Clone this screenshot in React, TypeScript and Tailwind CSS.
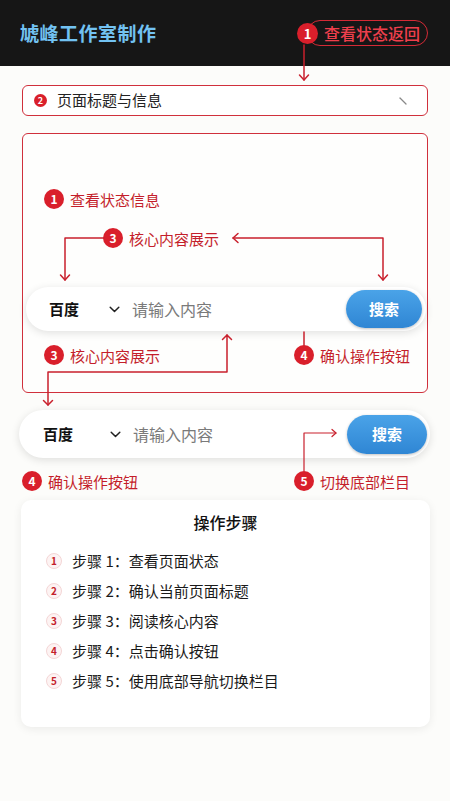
import React from "react";

const RED = "#c9202d";

function Badge({ n, size = 20, text = 12 }: { n: number; size?: number; text?: number }) {
  return (
    <span
      className="flex shrink-0 items-center justify-center rounded-full bg-[#d91f2b] font-bold text-white"
      style={{ width: size, height: size, fontSize: text, lineHeight: 1 }}
    >
      {n}
    </span>
  );
}

function Label({ n, label }: { n: number; label: string }) {
  return (
    <div className="flex items-center gap-[6px]">
      <Badge n={n} />
      <span className="text-[15px] leading-none text-[#c41e2b]">{label}</span>
    </div>
  );
}

function SearchBar({ h, btnW, btnH, pl, pr, leftW }: { h: number; btnW: number; btnH: number; pl: number; pr: number; leftW: number }) {
  return (
    <div
      className="flex items-center rounded-full bg-white shadow-[0_2px_8px_rgba(0,0,0,0.12)]"
      style={{ height: h, paddingLeft: pl, paddingRight: pr }}
    >
      <div className="flex shrink-0 items-center justify-between" style={{ width: leftW }}>
        <span className="text-[15px] font-bold text-[#111]">百度</span>
        <svg width="11" height="7" viewBox="0 0 11 7">
          <path d="M1.2 1.2 L5.5 5.5 L9.8 1.2" fill="none" stroke="#222" strokeWidth="1.5" strokeLinecap="round" strokeLinejoin="round" />
        </svg>
      </div>
      <span className="ml-[12px] text-[16px] text-[#7a7a7a]">请输入内容</span>
      <div className="flex-1" />
      <div
        className="flex items-center justify-center rounded-full bg-gradient-to-b from-[#4aa3e8] to-[#2f86d4] text-[15px] font-bold text-white shadow-[0_1px_3px_rgba(0,0,0,0.25)]"
        style={{ width: btnW, height: btnH }}
      >
        搜索
      </div>
    </div>
  );
}

function Arrows() {
  const s = { stroke: RED, strokeWidth: 1.5, fill: "none", strokeLinecap: "round" as const, strokeLinejoin: "round" as const };
  return (
    <svg className="pointer-events-none absolute left-0 top-0" width="450" height="801" viewBox="0 0 450 801">
      <path d="M304 45 V80" {...s} />
      <path d="M299.5 75 L304 80 L308.5 75" {...s} />
      <path d="M104 238 H65 V280" {...s} />
      <path d="M60.5 275 L65 280 L69.5 275" {...s} />
      <path d="M233 238 H383 V280" {...s} />
      <path d="M238 233.5 L233 238 L238 242.5" {...s} />
      <path d="M378.5 275 L383 280 L387.5 275" {...s} />
      <path d="M304 332 V345" {...s} />
      <path d="M227 335 V372 H48 V405" {...s} />
      <path d="M222.5 339.5 L227 335 L231.5 339.5" {...s} />
      <path d="M43.5 400.5 L48 405 L52.5 400.5" {...s} />
      <path d="M304 471 V433 H336" {...s} strokeWidth={1.2} />
      <path d="M332 429.5 L336 433 L332 436.5" {...s} strokeWidth={1.2} />
    </svg>
  );
}

export default function App() {
  const steps = ["查看页面状态", "确认当前页面标题", "阅读核心内容", "点击确认按钮", "使用底部导航切换栏目"];
  return (
    <div
      className="relative h-[801px] w-[450px] overflow-hidden bg-[#fcfcfa]"
      style={{ fontFamily: '"Noto Sans CJK SC", "Noto Sans", sans-serif' }}
    >
      {/* header */}
      <div className="flex h-[66px] items-center justify-between bg-[#161616] pl-[20px] pr-[22px]">
        <span className="text-[19px] font-bold tracking-[0.5px] text-[#72c2f2]">虓峰工作室制作</span>
        <div className="relative flex h-[26px] items-center">
          <div className="absolute left-[-10px] z-10">
            <Badge n={1} size={21} text={13} />
          </div>
          <div className="flex h-[26px] items-center rounded-full border-[1.5px] border-[#d42a36] pl-[16px] pr-[7px]">
            <span className="text-[16px] font-medium leading-none text-[#ee3f4c]">查看状态返回</span>
          </div>
        </div>
      </div>

      {/* box 2 */}
      <div className="mx-[22px] mt-[19px] flex h-[31px] items-center rounded-[6px] border-[1.5px] border-[#d0303c] bg-white pl-[11px] pr-[20px]">
        <Badge n={2} size={13} text={9} />
        <span className="ml-[10px] text-[15px] text-[#222]">页面标题与信息</span>
        <div className="flex-1" />
        <svg width="8" height="8" viewBox="0 0 8 8">
          <path d="M1 1 L7 7" stroke="#888" strokeWidth="1.3" strokeLinecap="round" />
        </svg>
      </div>

      {/* big box */}
      <div className="mx-[22px] mt-[17px] h-[260px] rounded-[6px] border-[1.5px] border-[#d0303c] bg-[#fefefd]">
        <div className="pl-[21px] pt-[55px]">
          <Label n={1} label="查看状态信息" />
        </div>
        <div className="pl-[80px] pt-[19px]">
          <Label n={3} label="核心内容展示" />
        </div>
        <div className="mt-[39px] pl-[3px] pr-[1px]">
          <SearchBar h={44} btnW={76} btnH={38} pl={23} pr={4} leftW={71} />
        </div>
        <div className="mt-[14px] flex pl-[21px]">
          <div className="w-[250px]">
            <Label n={3} label="核心内容展示" />
          </div>
          <Label n={4} label="确认操作按钮" />
        </div>
      </div>

      {/* search 2 */}
      <div className="ml-[19px] mr-[20px] mt-[17px]">
        <SearchBar h={48} btnW={80} btnH={39} pl={24} pr={3} leftW={78} />
      </div>

      <div className="mt-[13px] flex pl-[22px]">
        <div className="w-[272px]">
          <Label n={4} label="确认操作按钮" />
        </div>
        <Label n={5} label="切换底部栏目" />
      </div>

      {/* steps card */}
      <div className="ml-[21px] mr-[20px] mt-[9px] h-[227px] rounded-[10px] bg-white shadow-[0_2px_10px_rgba(0,0,0,0.07)]">
        <div className="pt-[10px] text-center text-[16px] font-medium text-[#111]">操作步骤</div>
        <div className="mt-[17px] flex flex-col gap-[10px] pl-[25px]">
          {steps.map((t, i) => (
            <div key={i} className="flex h-[20px] items-center">
              <span className="flex h-[16px] w-[16px] items-center justify-center rounded-full border border-[#f4d6d6] bg-[#fdf3f3] text-[10px] font-semibold leading-none text-[#c41e2b]">
                {i + 1}
              </span>
              <span className="ml-[10px] text-[15px] text-[#1a1a1a]">
                步骤 {i + 1}：{t}
              </span>
            </div>
          ))}
        </div>
      </div>

      <Arrows />
    </div>
  );
}
